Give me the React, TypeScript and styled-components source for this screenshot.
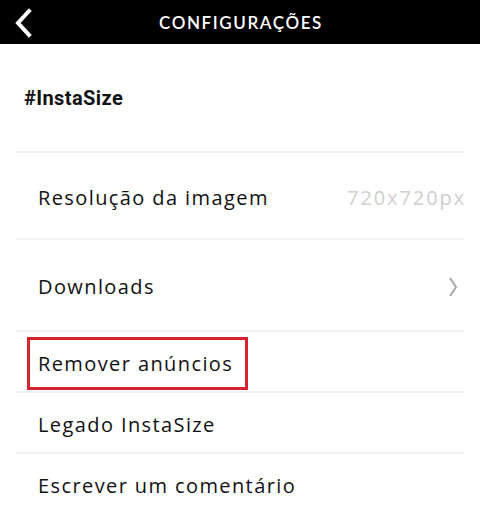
import React from "react";
import styled, { createGlobalStyle } from "styled-components";

const GlobalStyle = createGlobalStyle`
  html, body {
    margin: 0;
    padding: 0;
    background: #ffffff;
  }
  body {
    font-family: "Open Sans", "DejaVu Sans", sans-serif;
    width: 480px;
    height: 512px;
    overflow: hidden;
  }
`;

const Header = styled.header`
  height: 44px;
  background: #000000;
  display: flex;
  align-items: center;
  justify-content: center;
  position: relative;
`;

const BackButton = styled.button`
  position: absolute;
  left: 10px;
  top: 6px;
  width: 26px;
  height: 34px;
  padding: 0;
  border: none;
  background: transparent;
  display: flex;
  align-items: center;
  justify-content: center;
  cursor: pointer;
`;

const Title = styled.h1`
  margin: 0 0 0 2px;
  color: #ffffff;
  font-family: "Lato", "Open Sans", sans-serif;
  font-weight: 600;
  font-size: 17px;
  letter-spacing: 1.6px;
`;

const List = styled.div`
  margin: 0 16px;
  display: flex;
  flex-direction: column;
`;

const Brand = styled.div`
  height: 107px;
  display: flex;
  align-items: center;
  padding-left: 8px;
  font-family: "Roboto", sans-serif;
  font-weight: 700;
  font-size: 20px;
  letter-spacing: 0.4px;
  color: #111111;
`;

const Row = styled.div<{ $height: number }>`
  height: ${(p) => p.$height}px;
  box-sizing: border-box;
  border-top: 2px solid #f2f2f2;
  padding-top: 3px;
  display: flex;
  align-items: center;
  justify-content: space-between;
  padding-left: 22px;
`;

const Label = styled.span<{ $marked?: boolean }>`
  font-size: 20px;
  color: #111111;
  letter-spacing: 1.4px;
  ${(p) =>
    p.$marked &&
    `
    margin-left: -11px;
    padding: 10px 12px 10px 8px;
    border: 3px solid #d8232f;
  `}
`;

const Value = styled.span`
  font-size: 20px;
  color: #cfcfcf;
  letter-spacing: 1.9px;
  margin-right: -2px;
`;

const Chevron = styled.span`
  display: flex;
  align-items: center;
  padding-right: 6px;
`;

const App: React.FC = () => {
  return (
    <>
      <GlobalStyle />
      <Header>
        <BackButton aria-label="Voltar">
          <svg width="20" height="30" viewBox="0 0 20 30">
            <path
              d="M16 3 L5 15 L16 27"
              fill="none"
              stroke="#ffffff"
              strokeWidth="4"
              strokeLinecap="square"
            />
          </svg>
        </BackButton>
        <Title>CONFIGURAÇÕES</Title>
      </Header>
      <List>
        <Brand>#InstaSize</Brand>
        <Row $height={87}>
          <Label>Resolução da imagem</Label>
          <Value>720x720px</Value>
        </Row>
        <Row $height={92}>
          <Label>Downloads</Label>
          <Chevron>
            <svg width="10" height="20" viewBox="0 0 10 20">
              <path
                d="M2 1 L8 10 L2 19"
                fill="none"
                stroke="#a8a8a8"
                strokeWidth="2"
              />
            </svg>
          </Chevron>
        </Row>
        <Row $height={61}>
          <Label $marked>Remover anúncios</Label>
        </Row>
        <Row $height={61}>
          <Label>Legado InstaSize</Label>
        </Row>
        <Row $height={61}>
          <Label>Escrever um comentário</Label>
        </Row>
      </List>
    </>
  );
};

export default App;
